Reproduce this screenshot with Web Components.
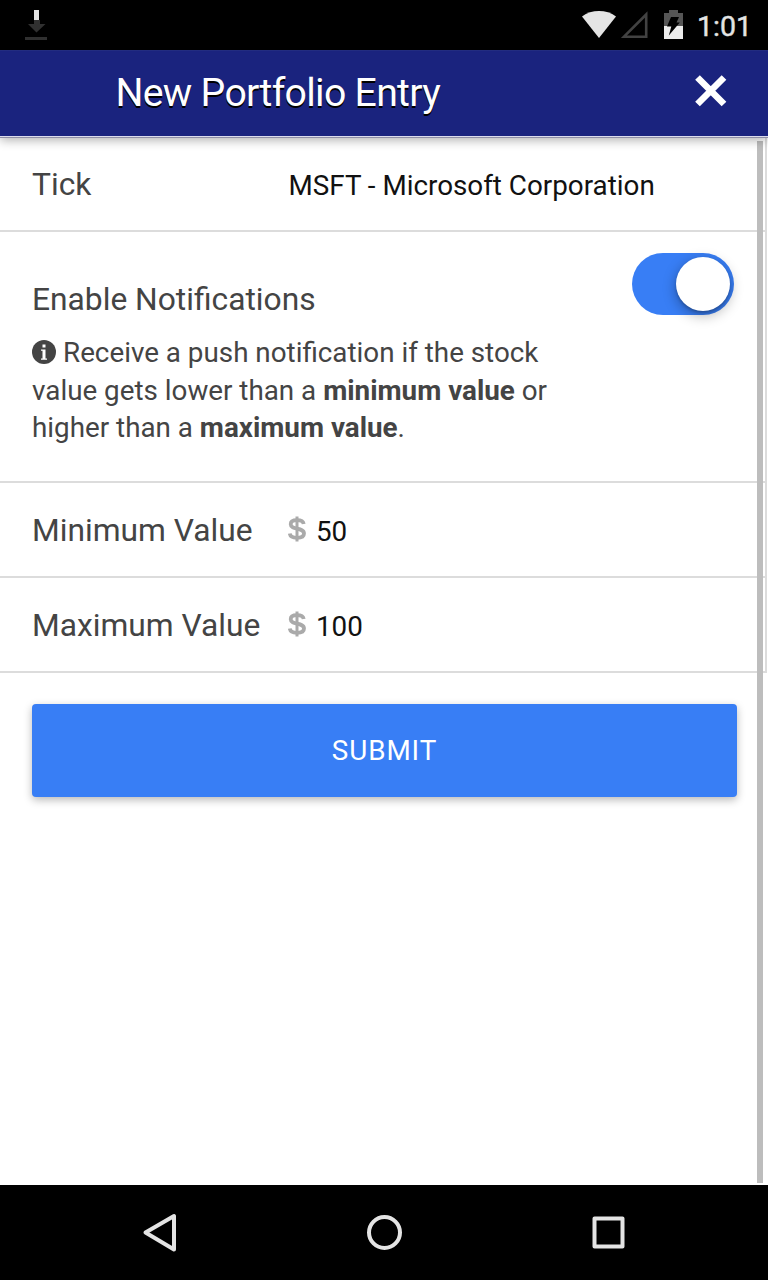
<!DOCTYPE html>
<html lang="en">
<head>
<meta charset="utf-8">
<title>New Portfolio Entry</title>
<style>
html,body{margin:0;height:100%;background:#fff}
body{font-family:Roboto,"Liberation Sans",sans-serif;color:#444}
</style>
</head>
<body>
<portfolio-screen></portfolio-screen>
<script>
const define = (name, html) => customElements.define(name, class extends HTMLElement {
  constructor() {
    super();
    const t = document.createElement('template');
    t.innerHTML = html;
    this.attachShadow({mode: 'open'}).append(t.content.cloneNode(true));
  }
});

define('status-bar', `
<style>
:host{display:flex;height:50px;box-sizing:border-box;background:#000;justify-content:space-between;align-items:flex-start;padding:0 17px 0 24px;color:#e4e4e4}
.right{display:flex}
svg{display:block}
time{font-size:28.500px;line-height:50px;padding-top:1.500px;margin-left:13px;font-weight:400;-webkit-text-stroke:.4px #e4e4e4;width:54px;white-space:nowrap}
</style>
<svg width="26" height="50" viewBox="24 0 26 50"><path fill="#303030" d="M34 20h6v4h5.500l-9 8.500-8.500-8.500h6zM25 37h22v3H25z"/><path fill="#e4e4e4" d="M34 10h5v10h-5z"/></svg>
<div class="right">
<svg width="103" height="50" viewBox="581 0 103 50">
<path fill="#e4e4e4" d="M582 16.500C591.500 9.200 606.500 9.200 616 16.500L599 38z"/>
<path fill="none" stroke="#424242" stroke-width="2.600" d="M646.200 14.500v22.200H624z"/>
<path fill="#565656" d="M664 26V13h5v-3h9v3h5v13z"/><path fill="#ececec" d="M664 26h19v13h-19z"/>
<path fill="#000" d="M671 17h8l-2.500 5.500h3.300L668.800 35.500l2.500-9h-4.300z"/>
</svg>
<time>1:01</time></div>`);

define('app-header', `
<style>
:host{display:flex;position:relative;z-index:2;height:86px;box-sizing:border-box;background:#1a237e;border-top:1px solid #222c80;align-items:center;justify-content:space-between;padding:0 40px 0 115.500px;box-shadow:0 1px 0 #dcdcec,0 2px 0 #8f8fa6,0 4px 10px rgba(0,0,0,.32)}
h1{margin:-2px 0 0;font-size:39.200px;font-weight:400;letter-spacing:-.7px;line-height:84px;color:#fff;text-shadow:0 2px 0 #000;white-space:nowrap}
svg{display:block;margin-top:-6px}
</style>
<h1><slot></slot></h1>
<svg width="34" height="34" viewBox="694 74 34 34"><path d="M697.500 77.500 724 104M724 77.500 697.500 104" stroke="#fff" stroke-width="6.600" stroke-linecap="butt" fill="none"/></svg>`);

define('form-row', `
<style>
:host{display:flex;box-sizing:border-box;height:95px;border-bottom:2px solid #dcdcdc;padding-left:32px;align-items:center}
.label{width:255.500px;font-size:31.750px;white-space:nowrap;line-height:40px;padding-top:3px}
.value{font-size:27.800px;color:#111;line-height:40px;padding:5px 0 0 1px;white-space:nowrap;display:flex}
</style>
<span class="label"><slot name="label"></slot></span><span class="value"><slot></slot></span>`);

define('dollar-icon', `
<style>:host{display:block;width:28.500px;height:40px;color:#aaa;margin-left:-1px}svg{display:block;margin-top:4px}</style>
<svg width="18" height="26" viewBox="0 0 18 26"><path d="M9 .5v25" fill="none" stroke="currentColor" stroke-width="3"/><path d="M15.700 8C15.200 5.200 12.500 4.200 9 4.200c-4 0-6.300 1.500-6.300 4 0 6 13.300 3 13.300 9.400 0 2.800-2.800 4.300-7 4.300-4 0-6.900-1.300-7.200-4.400" fill="none" stroke="currentColor" stroke-width="3.800"/></svg>`);

define('toggle-switch', `
<style>
:host{display:flex;box-sizing:border-box;width:101.500px;height:62px;border-radius:31px;background:#387ef5;padding:4px 3.500px 4px 4px;justify-content:flex-end}
i{width:54px;height:54px;border-radius:50%;background:#fff;box-shadow:0 4px 14px rgba(0,0,0,.33),0 2px 3px rgba(0,0,0,.2)}
</style><i></i>`);

define('notification-row', `
<style>
:host{display:flex;justify-content:space-between;align-items:flex-start;box-sizing:border-box;height:251px;border-bottom:2px solid #dcdcdc;padding:20.500px 31.500px 0 32px}
.text{padding-top:27.500px}
h2{margin:0;font-size:31.750px;font-weight:400;line-height:40px;white-space:nowrap}
p{margin:14.400px 0 0;font-size:27.800px;line-height:37.500px;white-space:nowrap}
svg{width:24px;height:24px;vertical-align:-1.500px;margin-right:7px}
b{font-weight:700}
</style>
<div class="text"><h2>Enable Notifications</h2>
<p><svg viewBox="0 0 24 24"><circle cx="12" cy="12" r="12" fill="#444"/><path fill="#fff" d="M10.500 4.500h3v3h-3zM9 9.500h4.500v9H15v1.200H9v-1.200h1.500v-7.800H9z"/></svg>Receive a push notification if the stock<br>value gets lower than a <b>minimum value</b> or<br>higher than a <b>maximum value</b>.</p></div>
<toggle-switch></toggle-switch>`);

define('submit-button', `
<style>
:host{display:block;margin:31px 31px 0 32px}
button{display:block;width:100%;height:93px;border:0;border-radius:4px;background:#387ef5;color:#fff;font:400 27.800px/92px Roboto,"Liberation Sans",sans-serif;letter-spacing:.9px;padding:0;box-shadow:0 3px 8px rgba(0,0,0,.28)}
</style><button><slot></slot></button>`);

define('nav-bar', `
<style>
:host{display:flex;height:95px;box-sizing:border-box;background:#000;justify-content:space-between;align-items:center;padding:0 141.500px 0 141px}
svg{display:block;fill:none;stroke:#e4e4e4;stroke-width:4;stroke-linejoin:round}
</style>
<svg width="38" height="40" viewBox="0 0 38 40"><path d="M33 3v33.500L4.500 19.500z"/></svg>
<svg width="38" height="40" viewBox="0 0 38 40"><circle cx="19.500" cy="19.500" r="15.500"/></svg>
<svg width="38" height="40" viewBox="0 0 38 40"><path d="M5.500 5.500h28v28h-28z"/></svg>`);

define('portfolio-screen', `
<style>
:host{display:flex;flex-direction:column;width:768px;height:1280px;overflow:hidden;background:#fff}
main{position:relative;flex:1}
.list{display:block;height:537px;box-sizing:border-box;border-right:2px solid #dcdcdc;width:767px;padding-top:1px}
.scroll{position:absolute;right:5px;top:5px;bottom:2px;width:6px;background:#bdbdbd}
status-bar,app-header,nav-bar{flex:none}
</style>
<status-bar></status-bar>
<app-header>New Portfolio Entry</app-header>
<main>
<section class="list">
<form-row><span slot="label">Tick</span>MSFT - Microsoft Corporation</form-row>
<notification-row></notification-row>
<form-row><span slot="label">Minimum Value</span><dollar-icon></dollar-icon>50</form-row>
<form-row><span slot="label">Maximum Value</span><dollar-icon></dollar-icon>100</form-row>
</section>
<submit-button>SUBMIT</submit-button>
<div class="scroll"></div>
</main>
<nav-bar></nav-bar>`);
</script>
</body>
</html>
